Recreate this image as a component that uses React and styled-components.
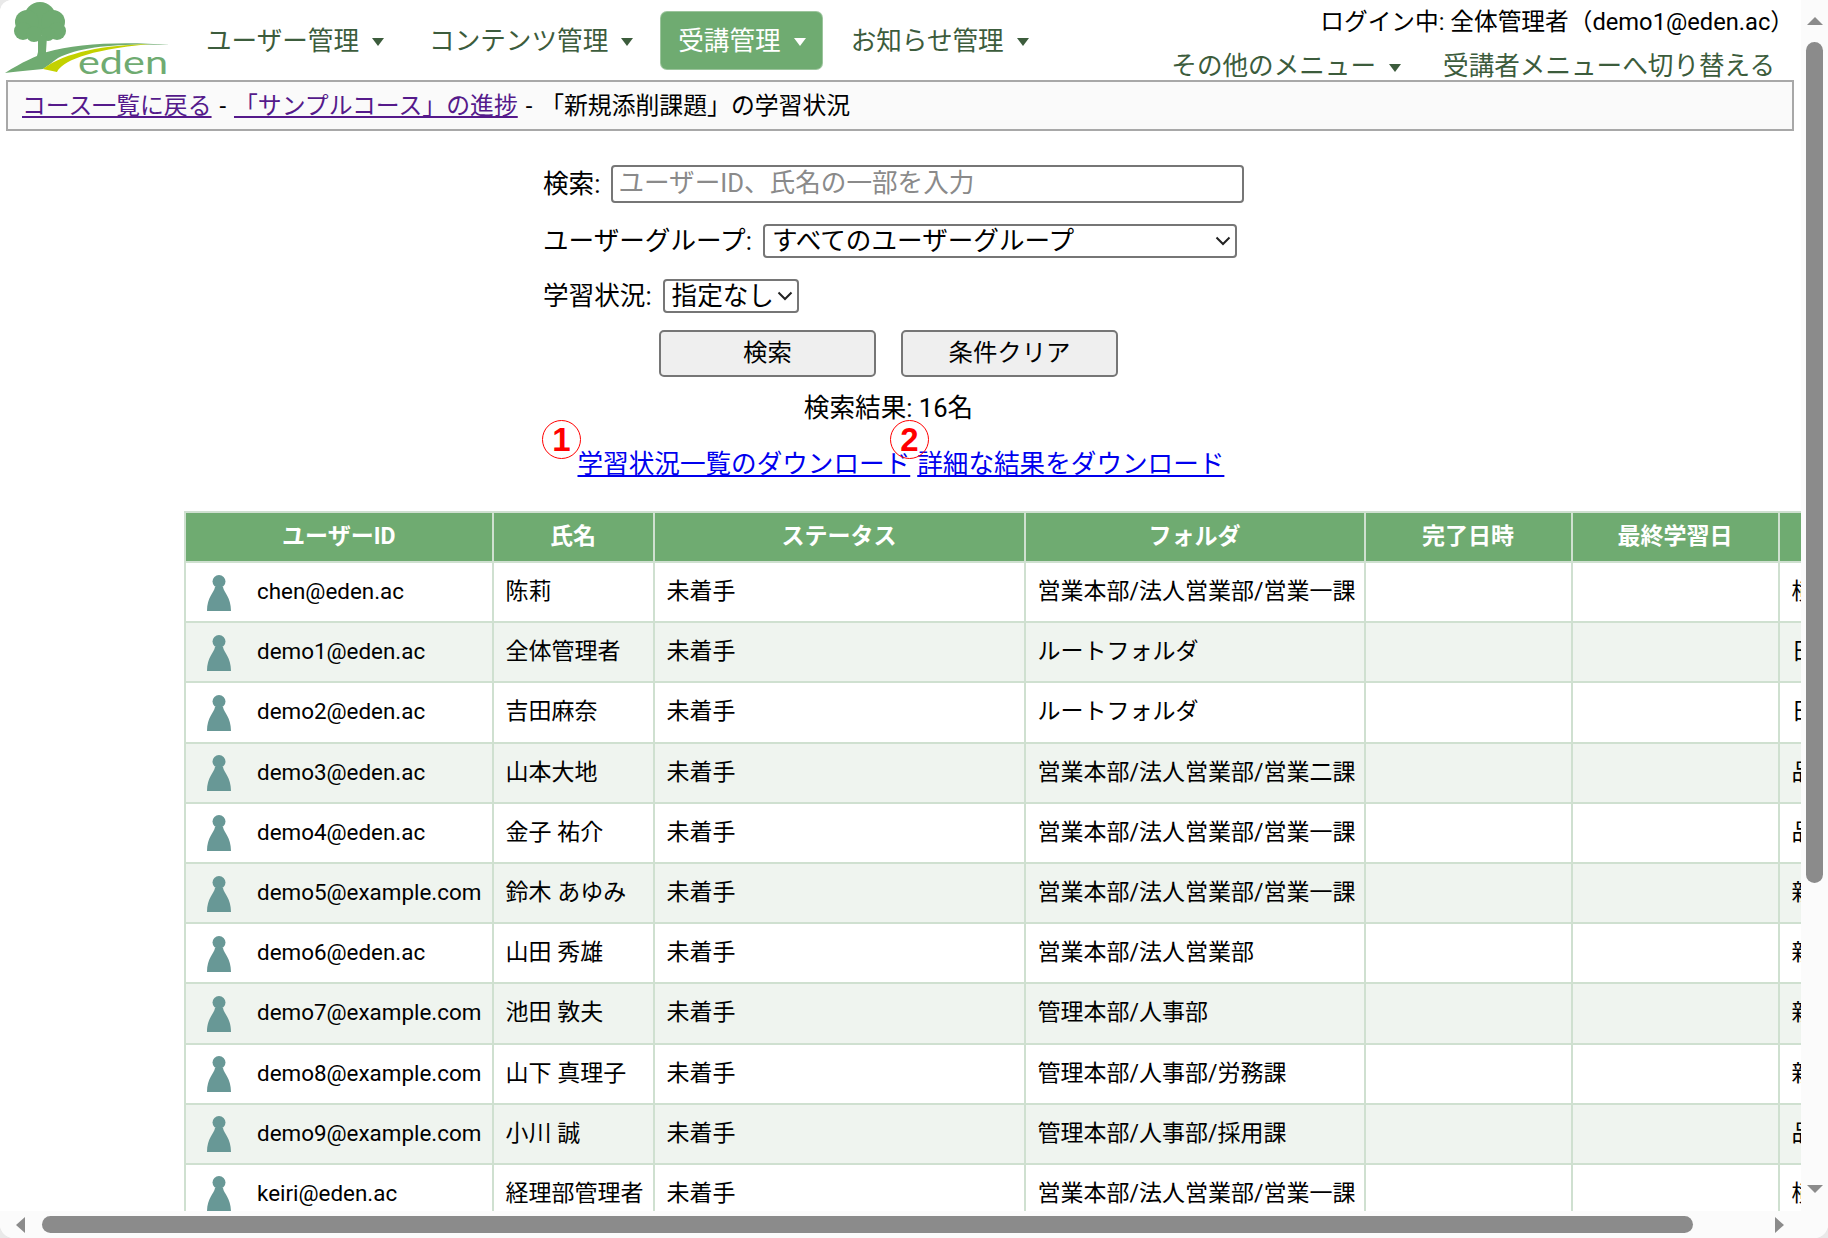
import React from 'react';
import styled, { createGlobalStyle } from 'styled-components';

const GREEN = '#6fab71';
const NAV_TEXT = '#3c5c3c';
const LINE = '#cfe0d0';
const FONT = 'Roboto, "Noto Sans CJK JP", sans-serif';

const Global = createGlobalStyle`
    html, body { margin: 0; padding: 0; background: #e9e9e9; }
    body { font-family: ${FONT}; color: #000; }
`;

const columns = [307.5, 161, 371, 340, 207, 207, 300];
const headings = ['ユーザーID', '氏名', 'ステータス', 'フォルダ', '完了日時', '最終学習日', '事業所'];

const people = [
    ['chen@eden.ac', '陈莉', '営業本部/法人営業部/営業一課', '横浜'],
    ['demo1@eden.ac', '全体管理者', 'ルートフォルダ', '日本橋'],
    ['demo2@eden.ac', '吉田麻奈', 'ルートフォルダ', '日本橋'],
    ['demo3@eden.ac', '山本大地', '営業本部/法人営業部/営業二課', '品川'],
    ['demo4@eden.ac', '金子 祐介', '営業本部/法人営業部/営業一課', '品川'],
    ['demo5@example.com', '鈴木 あゆみ', '営業本部/法人営業部/営業一課', '新宿'],
    ['demo6@eden.ac', '山田 秀雄', '営業本部/法人営業部', '新宿'],
    ['demo7@example.com', '池田 敦夫', '管理本部/人事部', '新宿'],
    ['demo8@example.com', '山下 真理子', '管理本部/人事部/労務課', '新宿'],
    ['demo9@example.com', '小川 誠', '管理本部/人事部/採用課', '品川'],
    ['keiri@eden.ac', '経理部管理者', '営業本部/法人営業部/営業一課', '横浜'],
];

const Logo = () => (
    <LogoSvg viewBox="0 0 170 78">
        <g fill={GREEN}>
            <circle cx="40" cy="18" r="16" />
            <circle cx="27" cy="22" r="12" />
            <circle cx="53" cy="22" r="12" />
            <circle cx="23" cy="31" r="9" />
            <circle cx="57" cy="31" r="9" />
            <circle cx="34" cy="34" r="8" />
            <circle cx="48" cy="34" r="7" />
            <path d="M38 36 L47 36 L46 52 L49 56 L36 60 L38 52 Z" />
            <path d="M5 73 C22 62 36 56 47 52 C75 44 120 41 170 45 C125 43 80 46 58 58 C52 62 48 66 43 69 C30 70 15 72 5 73 Z" />
        </g>
        <path d="M43 69 L57 72 C62 62 85 50 150 44 C105 45 65 52 43 69 Z" fill="#c3d100" />
        <EdenText x="78" y="74" textLength="90" lengthAdjust="spacingAndGlyphs">eden</EdenText>
    </LogoSvg>
);

const Person = () => (
    <PersonSvg viewBox="0 0 24 36">
        <circle cx="12" cy="6.5" r="6.5" fill="#689896" />
        <path d="M8 12 L16 12 C17 18 24 22 24 36 L0 36 C0 22 7 18 8 12 Z" fill="#689896" />
    </PersonSvg>
);

const Chevron = () => (
    <ChevronSvg viewBox="0 0 16 10">
        <path d="M1.5 1.5 L8 8 L14.5 1.5" fill="none" stroke="#222" strokeWidth="2" />
    </ChevronSvg>
);

const App = () => (
    <Frame>
        <Global />
        <Main>
            <Header>
                <Logo />
                <Nav>
                    <NavItem>ユーザー管理<NavCaret /></NavItem>
                    <NavItem>コンテンツ管理<NavCaret /></NavItem>
                    <NavItem $active>受講管理<NavCaret $active /></NavItem>
                    <NavItem>お知らせ管理<NavCaret /></NavItem>
                </Nav>
                <HeaderRight>
                    <LoginInfo>ログイン中: 全体管理者（demo1@eden.ac）</LoginInfo>
                    <SubNav>
                        <span>その他のメニュー<Caret /></span>
                        <span>受講者メニューへ切り替える</span>
                    </SubNav>
                </HeaderRight>
            </Header>

            <Breadcrumb>
                <VisitedLink href="#">コース一覧に戻る</VisitedLink> - <VisitedLink href="#">「サンプルコース」の進捗</VisitedLink> - 「新規添削課題」の学習状況
            </Breadcrumb>

            <SearchForm onSubmit={(e) => e.preventDefault()}>
                <FieldRow $height={38}>
                    <FieldName>検索:</FieldName>
                    <SearchInput type="text" placeholder="ユーザーID、氏名の一部を入力" />
                </FieldRow>
                <FieldRow $height={34} $top={21}>
                    <FieldName>ユーザーグループ:</FieldName>
                    <SelectWrap $width={474}>
                        <Select defaultValue="all">
                            <option value="all">すべてのユーザーグループ</option>
                        </Select>
                        <Chevron />
                    </SelectWrap>
                </FieldRow>
                <FieldRow $height={34} $top={21}>
                    <FieldName>学習状況:</FieldName>
                    <SelectWrap $width={136}>
                        <Select defaultValue="none">
                            <option value="none">指定なし</option>
                        </Select>
                        <Chevron />
                    </SelectWrap>
                </FieldRow>
                <ButtonRow>
                    <FormButton type="submit">検索</FormButton>
                    <FormButton type="button">条件クリア</FormButton>
                </ButtonRow>
                <ResultCount>検索結果: 16名</ResultCount>
                <Downloads>
                    <Marker $left={-1}>1</Marker>
                    <a href="#">学習状況一覧のダウンロード</a>
                    <Marker $left={347}>2</Marker>
                    <a href="#">詳細な結果をダウンロード</a>
                </Downloads>
            </SearchForm>

            <Table>
                <colgroup>
                    {columns.map((w, i) => <col key={i} style={{ width: w }} />)}
                </colgroup>
                <thead>
                    <tr>{headings.map((h) => <Th key={h}>{h}</Th>)}</tr>
                </thead>
                <tbody>
                    {people.map(([id, name, folder, place]) => (
                        <Row key={id}>
                            <Td>
                                <UserCell><Person /><UserId>{id}</UserId></UserCell>
                            </Td>
                            <Td>{name}</Td>
                            <Td>未着手</Td>
                            <Td>{folder}</Td>
                            <Td />
                            <Td />
                            <Td>{place}</Td>
                        </Row>
                    ))}
                </tbody>
            </Table>
        </Main>

        <VerticalBar>
            <ArrowUp />
            <VerticalThumb />
            <Spacer />
            <ArrowDown />
        </VerticalBar>
        <HorizontalBar>
            <ArrowLeft />
            <HorizontalThumb />
            <Spacer />
            <ArrowRight />
        </HorizontalBar>
    </Frame>
);

const Frame = styled.div`
    width: 1828px;
    height: 1238px;
    display: grid;
    grid-template-columns: 1801px 27px;
    grid-template-rows: 1211px 27px;
    overflow: hidden;
    background: #fff;
    border-radius: 12px 0 14px 14px;
`;

const Main = styled.main`
    overflow: hidden;
    background: #fff;
    min-width: 0;
`;

const Header = styled.header`
    height: 80px;
    display: flex;
    align-items: flex-start;
    padding-left: 5px;
`;

const LogoSvg = styled.svg`
    width: 170px;
    height: 78px;
    flex: none;
    margin-left: -5px;
    margin-right: 19px;
`;

const EdenText = styled.text`
    font-family: Lato, sans-serif;
    font-size: 32px;
    fill: ${GREEN};
`;

const Nav = styled.nav`
    display: flex;
    gap: 12px;
    margin-top: 12px;
`;

const NavItem = styled.div`
    height: 57px;
    box-sizing: border-box;
    padding: 0 16px 4px 17px;
    display: flex;
    align-items: center;
    font-size: 25.6px;
    white-space: nowrap;
    border-radius: 6px;
    color: ${(p) => (p.$active ? '#fff' : NAV_TEXT)};
    background: ${(p) => (p.$active ? GREEN : 'transparent')};
    box-shadow: ${(p) => (p.$active ? '0 0 0 1px #9cc59d' : 'none')};
`;

const Caret = styled.i`
    display: inline-block;
    margin-left: 13px;
    border-left: 6.5px solid transparent;
    border-right: 6.5px solid transparent;
    border-top: 8px solid ${(p) => (p.$active ? '#fff' : NAV_TEXT)};
    vertical-align: middle;
`;

const NavCaret = styled(Caret)`
    margin-top: 7px;
`;

const HeaderRight = styled.div`
    margin-left: auto;
    padding-right: 7px;
    display: flex;
    flex-direction: column;
    align-items: flex-end;
    white-space: nowrap;
`;

const LoginInfo = styled.div`
    font-size: 23.7px;
    line-height: 32px;
    margin-top: 6px;
`;

const SubNav = styled.div`
    display: flex;
    gap: 42px;
    font-size: 25.6px;
    line-height: 36px;
    margin-top: 10px;
    padding-right: 19px;
    color: ${NAV_TEXT};
`;

const Breadcrumb = styled.div`
    box-sizing: border-box;
    width: 1788px;
    height: 51px;
    margin-left: 6px;
    padding-left: 14px;
    line-height: 49px;
    font-size: 23.85px;
    word-spacing: 2px;
    border: 2px solid #a8a8a8;
    background: #fafafa;
    white-space: pre;
`;

const VisitedLink = styled.a`
    color: #551a8b;
`;

const SearchForm = styled.form`
    width: 691px;
    margin: 34px 0 0 543px;
    font-size: 25.6px;
`;

const FieldRow = styled.label`
    display: flex;
    align-items: center;
    gap: 11px;
    height: ${(p) => p.$height}px;
    margin-top: ${(p) => p.$top || 0}px;
    white-space: nowrap;
`;

const FieldName = styled.span`
    margin-bottom: 5px;
`;

const SearchInput = styled.input`
    flex: none;
    box-sizing: border-box;
    width: 633px;
    height: 38px;
    padding: 0 5px 2px;
    font: 25.6px ${FONT};
    border: 2px solid #767676;
    border-radius: 4px;
    &::placeholder { color: #8a8a8a; }
`;

const SelectWrap = styled.span`
    position: relative;
    flex: none;
    display: block;
    width: ${(p) => p.$width}px;
    height: 34px;
`;

const Select = styled.select`
    appearance: none;
    display: block;
    box-sizing: border-box;
    width: 100%;
    height: 100%;
    font: 25.6px ${FONT};
    color: #000;
    padding: 0 7px 4px;
    border: 2px solid #767676;
    border-radius: 4px;
    background: #fff;
`;

const ChevronSvg = styled.svg`
    position: absolute;
    right: 6px;
    top: 12px;
    width: 16px;
    height: 10px;
    pointer-events: none;
`;

const ButtonRow = styled.div`
    display: flex;
    justify-content: center;
    gap: 25px;
    margin-top: 17px;
`;

const FormButton = styled.button`
    width: 217px;
    height: 47px;
    padding: 0 0 6px;
    font: 24.4px ${FONT};
    background: #efefef;
    border: 2px solid #767676;
    border-radius: 5px;
    color: #000;
`;

const ResultCount = styled.div`
    margin-top: 13px;
    text-align: center;
    line-height: 36px;
`;

const Downloads = styled.div`
    position: relative;
    margin-top: 20px;
    padding-left: 34.5px;
    line-height: 36px;
    white-space: nowrap;
    display: flex;
    gap: 7px;
    & a { color: #0000ee; }
`;

const Marker = styled.span`
    position: absolute;
    left: ${(p) => p.$left}px;
    top: -26px;
    box-sizing: border-box;
    width: 39px;
    height: 39px;
    border: 1.5px solid #f00;
    border-radius: 50%;
    display: flex;
    align-items: center;
    justify-content: center;
    font: bold 33px "Liberation Sans", sans-serif;
    color: #f00;
`;

const Table = styled.table`
    table-layout: auto;
    width: max-content;
    margin: 29px 0 0 184px;
    border-collapse: collapse;
    font-size: 23px;
`;

const Th = styled.th`
    height: 50px;
    padding: 0 0 7px;
    box-sizing: border-box;
    background: ${GREEN};
    color: #fff;
    font-weight: bold;
    font-size: 23.04px;
    border: 2px solid ${LINE};
    white-space: nowrap;
    overflow: hidden;
`;

const Row = styled.tr`
    height: 60.2px;
    &:nth-child(even) { background: #eff4ef; }
`;

const Td = styled.td`
    padding: 0 0 6px 12px;
    border: 2px solid ${LINE};
    white-space: nowrap;
    overflow: hidden;
`;

const UserCell = styled.div`
    display: flex;
    align-items: center;
    gap: 26px;
    padding-left: 9px;
`;

const UserId = styled.span`
    font-size: 22.4px;
    padding-top: 4px;
`;

const PersonSvg = styled.svg`
    width: 24px;
    height: 36px;
    flex: none;
    margin-top: 7px;
`;

const VerticalBar = styled.div`
    background: #fbfbfb;
    display: flex;
    flex-direction: column;
    align-items: center;
    padding: 17px 0 18px;
`;

const HorizontalBar = styled.div`
    grid-column: 1 / -1;
    background: #fbfbfb;
    display: flex;
    align-items: center;
    padding: 0 44px 0 16px;
`;

const VerticalThumb = styled.div`
    width: 17px;
    height: 841px;
    margin-top: 17px;
    border-radius: 9px;
    background: #8b8b8b;
`;

const HorizontalThumb = styled.div`
    width: 1651px;
    height: 17px;
    margin-left: 17px;
    border-radius: 9px;
    background: #8b8b8b;
`;

const Spacer = styled.div`
    flex: 1;
`;

const ArrowUp = styled.i`
    border-left: 8.5px solid transparent;
    border-right: 8.5px solid transparent;
    border-bottom: 8px solid #8b8b8b;
`;

const ArrowDown = styled.i`
    border-left: 8.5px solid transparent;
    border-right: 8.5px solid transparent;
    border-top: 8px solid #8b8b8b;
`;

const ArrowLeft = styled.i`
    border-top: 8.5px solid transparent;
    border-bottom: 8.5px solid transparent;
    border-right: 9px solid #8b8b8b;
`;

const ArrowRight = styled.i`
    border-top: 8.5px solid transparent;
    border-bottom: 8.5px solid transparent;
    border-left: 9px solid #8b8b8b;
`;

export default App;
